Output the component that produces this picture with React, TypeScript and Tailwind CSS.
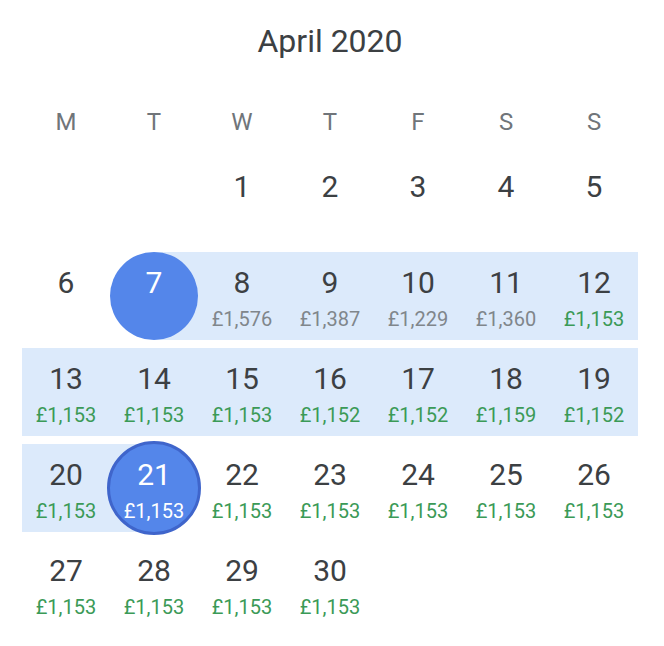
import React from "react";

type Day = {
  n: number;
  price?: string;
  cheap?: boolean;
};

const weekdays = ["M", "T", "W", "T", "F", "S", "S"];

const prices: Record<number, string> = {
  8: "£1,576",
  9: "£1,387",
  10: "£1,229",
  11: "£1,360",
  12: "£1,153",
  13: "£1,153",
  14: "£1,153",
  15: "£1,153",
  16: "£1,152",
  17: "£1,152",
  18: "£1,159",
  19: "£1,152",
};

const buildDays = (): (Day | null)[] => {
  const cells: (Day | null)[] = [null, null];
  for (let n = 1; n <= 30; n++) {
    if (n < 8) {
      cells.push({ n });
    } else {
      const price = prices[n] ?? "£1,153";
      cells.push({ n, price, cheap: n >= 12 });
    }
  }
  return cells;
};

const DEPART = 7;
const RETURN = 21;

const DayCell = ({ day }: { day: Day | null }) => {
  if (!day) return <div className="h-[88px]" />;

  const isStart = day.n === DEPART;
  const isEnd = day.n === RETURN;
  const inRange = day.n > DEPART && day.n < RETURN;
  const selected = isStart || isEnd;

  return (
    <div className={`relative h-[88px] ${inRange ? "bg-[#dceafb]" : ""}`}>
      {/* half band behind the circles */}
      {isStart && <div className="absolute inset-y-0 left-1/2 right-0 bg-[#dceafb]" />}
      {isEnd && <div className="absolute inset-y-0 left-0 right-1/2 bg-[#dceafb]" />}

      {isStart && <div className="absolute inset-0 rounded-full bg-[#5486ea]" />}
      {isEnd && (
        <div className="absolute -inset-[3px] rounded-full border-[3px] border-[#3f65cb] bg-[#5486ea]" />
      )}

      <div className="relative flex flex-col items-center pt-[11px]">
        <span
          className={`text-[30px] leading-[40px] ${selected ? "text-white" : "text-[#3c4043]"}`}
        >
          {day.n}
        </span>
        {day.price && (
          <span
            className={`mt-[2px] text-[20px] leading-[28px] ${
              isEnd ? "text-white" : day.cheap ? "text-[#3b9a57]" : "text-[#80868b]"
            }`}
          >
            {day.price}
          </span>
        )}
      </div>
    </div>
  );
};

export default function App() {
  const days = buildDays();

  return (
    <div className="h-[646px] w-[664px] bg-white font-['Roboto',_'Liberation_Sans',_sans-serif]">
      <div className="ml-[22px] w-[616px]">
        {/* Month title */}
        <div className="pt-[21px] text-center text-[32px] leading-[40px] text-[#3c4043]">
          April 2020
        </div>

        {/* Weekday header */}
        <div className="mt-[45px] grid grid-cols-7">
          {weekdays.map((w, i) => (
            <div key={i} className="text-center text-[24px] leading-[32px] text-[#70757a]">
              {w}
            </div>
          ))}
        </div>

        {/* Days */}
        <div className="mt-[18px] grid grid-cols-7 gap-y-[8px]">
          {days.map((d, i) => (
            <DayCell key={i} day={d} />
          ))}
        </div>
      </div>
    </div>
  );
}
